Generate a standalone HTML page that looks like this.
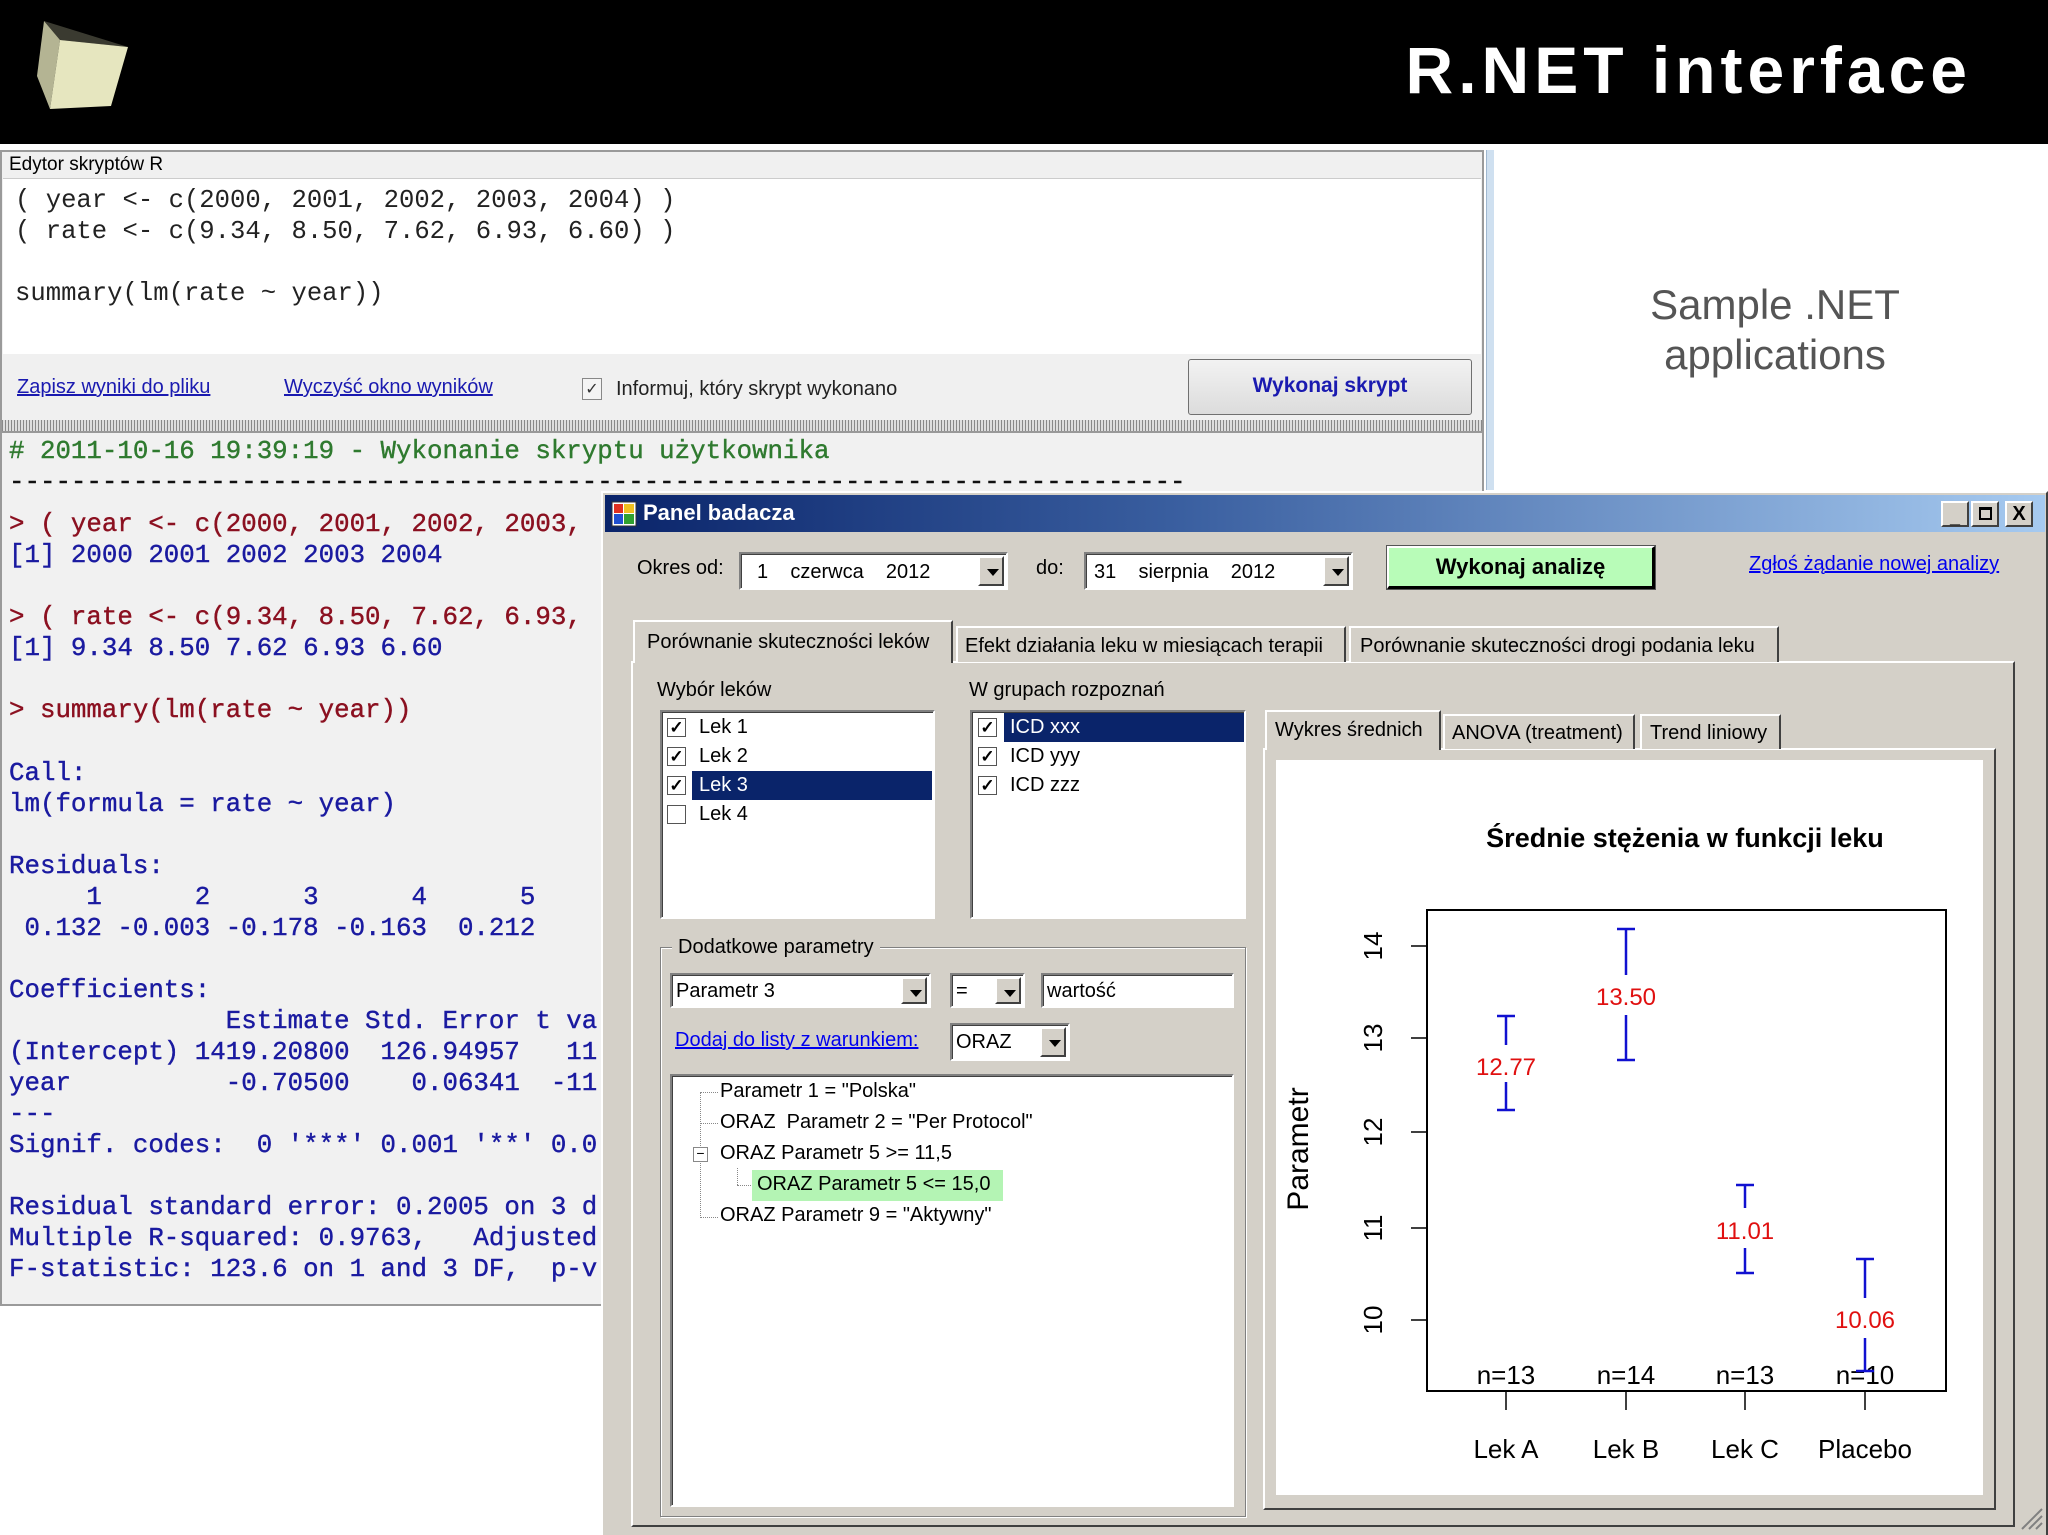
<!DOCTYPE html>
<html><head><meta charset="utf-8"><style>
*{margin:0;padding:0;box-sizing:border-box}
body{width:2048px;height:1535px;position:relative;overflow:hidden;background:#fff;font-family:"Liberation Sans",sans-serif}
.a{position:absolute}
.mono{font-family:"Liberation Mono",monospace;white-space:pre}
.ui{font-family:"Liberation Sans",sans-serif;font-size:20px;color:#000;white-space:nowrap}
.sunk{background:#fff;border-top:2px solid #808080;border-left:2px solid #808080;border-right:2px solid #fff;border-bottom:2px solid #fff;box-shadow:inset 1px 1px 0 #404040}
.btnd{background:#d4d0c8;border-top:2px solid #fff;border-left:2px solid #fff;border-right:2px solid #404040;border-bottom:2px solid #404040}
.arr{position:absolute;top:2px;right:2px;bottom:2px;width:26px;background:#d4d0c8;border-top:2px solid #fff;border-left:2px solid #fff;border-right:2px solid #404040;border-bottom:2px solid #404040}
.arr:after{content:"";position:absolute;left:7px;top:11px;border-left:6px solid transparent;border-right:6px solid transparent;border-top:7px solid #000}
.lnk{color:#0000ee;text-decoration:underline}
.out{position:absolute;left:9px;font-family:"Liberation Mono",monospace;font-size:25.8px;white-space:pre;font-weight:normal;-webkit-text-stroke:0.4px currentColor}
.cb{position:absolute;width:19px;height:19px;background:#fff;border:1px solid #555;font-size:17px;line-height:17px;text-align:center;font-weight:bold}
</style></head><body>
<!-- header -->
<div class="a" style="left:0;top:0;width:2048px;height:144px;background:#000"></div>
<svg class="a" style="left:0;top:0" width="160" height="140" viewBox="0 0 160 140">
<polygon points="44,21 128,47 60,40" fill="#3a3a30"/>
<polygon points="44,21 60,40 50,109 37,76" fill="#b4b493"/>
<polygon points="60,40 128,47 111,106 50,109" fill="#e6e6bf"/>
</svg>
<div class="a" style="left:1300px;top:30px;width:672px;text-align:right;color:#fff;font-weight:bold;font-size:66px;line-height:80px;letter-spacing:5px">R.NET interface</div>
<div class="a" style="left:1560px;top:280px;width:430px;text-align:center;color:#555;font-size:42px;line-height:50px">Sample .NET<br>applications</div>

<!-- editor -->
<div class="a" style="left:0;top:150px;width:1484px;height:1156px;background:#f0f0f0;border:2px solid #9a9a9a"></div>
<div class="a" style="left:1486px;top:150px;width:8px;height:340px;background:#cfe0f0;border-left:1px solid #a0b8d0"></div>
<div class="a ui" style="left:9px;top:154px;font-size:19px">Edytor skryptów R</div>
<div class="a" style="left:3px;top:178px;width:1478px;height:176px;background:#fff;border-top:1px solid #ccc"></div>
<div class="a mono" style="left:15px;top:185px;font-size:25.6px;line-height:31px;color:#222">( year &lt;- c(2000, 2001, 2002, 2003, 2004) )
( rate &lt;- c(9.34, 8.50, 7.62, 6.93, 6.60) )

summary(lm(rate ~ year))</div>
<div class="a ui lnk" style="left:17px;top:376px;color:#1a1ab0">Zapisz wyniki do pliku</div>
<div class="a ui lnk" style="left:284px;top:376px;color:#1a1ab0">Wyczyść okno wyników</div>
<div class="a" style="left:582px;top:378px;width:20px;height:22px;border:1px solid #888;background:#f4f4f4;font-size:16px;text-align:center;color:#333">✓</div>
<div class="a ui" style="left:616px;top:378px;color:#222">Informuj, który skrypt wykonano</div>
<div class="a" style="left:1188px;top:359px;width:284px;height:56px;border:1px solid #707070;border-radius:3px;background:linear-gradient(#f2f2f2,#dcdcdc);text-align:center;line-height:52px;font-weight:bold;font-size:21px;color:#1a1ab0">Wykonaj skrypt</div>
<div class="a" style="left:2px;top:420px;width:1480px;height:11px;background:repeating-linear-gradient(90deg,#888 0 1px,#ddd 1px 3px)"></div>
<div class="a" style="left:2px;top:431px;width:1480px;height:873px;background:#f1f1f1;border-top:2px solid #999"></div>
<div class="out" style="top:437px;color:#2f7a2f"># 2011-10-16 19:39:19 - Wykonanie skryptu użytkownika</div>
<div class="out" style="top:468px;color:#111">----------------------------------------------------------------------------</div>
<div class="out" style="top:510px;color:#8b1020">&gt; ( year &lt;- c(2000, 2001, 2002, 2003,</div>
<div class="out" style="top:541px;color:#1a1aa0">[1] 2000 2001 2002 2003 2004</div>
<div class="out" style="top:603px;color:#8b1020">&gt; ( rate &lt;- c(9.34, 8.50, 7.62, 6.93,</div>
<div class="out" style="top:634px;color:#1a1aa0">[1] 9.34 8.50 7.62 6.93 6.60</div>
<div class="out" style="top:696px;color:#8b1020">&gt; summary(lm(rate ~ year))</div>
<div class="out" style="top:758px;color:#1a1aa0;line-height:31px">Call:
lm(formula = rate ~ year)

Residuals:
     1      2      3      4      5
 0.132 -0.003 -0.178 -0.163  0.212

Coefficients:
              Estimate Std. Error t va
(Intercept) 1419.20800  126.94957   11
year          -0.70500    0.06341  -11
---
Signif. codes:  0 '***' 0.001 '**' 0.0

Residual standard error: 0.2005 on 3 d
Multiple R-squared: 0.9763,   Adjusted
F-statistic: 123.6 on 1 and 3 DF,  p-v</div>

<!-- panel badacza -->
<div class="a" style="left:601px;top:491px;width:1447px;height:1044px;background:#d4d0c8;border:2px solid #fff;border-right-color:#404040;border-bottom:none"></div>
<div class="a" style="left:605px;top:495px;width:1440px;height:37px;background:linear-gradient(90deg,#0a246a,#3a5fa0 40%,#a6caf0)"></div>
<svg class="a" style="left:611px;top:501px" width="26" height="26"><rect x="1" y="1" width="24" height="24" fill="#fff" stroke="#333"/><rect x="3" y="3" width="9" height="9" fill="#e03020"/><rect x="13" y="3" width="10" height="9" fill="#f0c020"/><rect x="3" y="13" width="9" height="10" fill="#2050d0"/><rect x="13" y="13" width="10" height="10" fill="#30a030"/></svg>
<div class="a" style="left:643px;top:500px;color:#fff;font-weight:bold;font-size:22px">Panel badacza</div>
<div class="a btnd" style="left:1941px;top:501px;width:28px;height:26px;font-size:18px;font-weight:bold;text-align:center;line-height:28px">_</div>
<div class="a btnd" style="left:1971px;top:501px;width:28px;height:26px"><div class="a" style="left:6px;top:4px;width:13px;height:13px;border:2px solid #000;border-top-width:3px"></div></div>
<div class="a btnd" style="left:2005px;top:501px;width:28px;height:26px;font-size:20px;font-weight:bold;text-align:center;line-height:22px">X</div>

<div class="a ui" style="left:637px;top:557px">Okres od:</div>
<div class="a sunk" style="left:739px;top:552px;width:269px;height:38px"><span class="a ui" style="left:16px;top:7px">1&nbsp;&nbsp;&nbsp; czerwca&nbsp;&nbsp;&nbsp; 2012</span><div class="arr"></div></div>
<div class="a ui" style="left:1036px;top:557px">do:</div>
<div class="a sunk" style="left:1084px;top:552px;width:269px;height:38px"><span class="a ui" style="left:8px;top:7px">31&nbsp;&nbsp;&nbsp; sierpnia&nbsp;&nbsp;&nbsp; 2012</span><div class="arr"></div></div>
<div class="a" style="left:1387px;top:546px;width:268px;height:43px;background:#b8fcb8;border:2px solid #fff;border-right:3px solid #000;border-bottom:3px solid #000;outline:1px solid #555;text-align:center;line-height:38px;font-weight:bold;font-size:22px">Wykonaj analizę</div>
<div class="a ui lnk" style="left:1749px;top:553px">Zgłoś żądanie nowej analizy</div>

<!-- main tabs -->
<div class="a" style="left:631px;top:661px;width:1384px;height:866px;border-top:2px solid #fff;border-left:2px solid #fff;border-right:2px solid #404040;border-bottom:2px solid #404040"></div>
<div class="a btnd" style="left:633px;top:620px;width:320px;height:43px;border-bottom:none;background:#d4d0c8"><span class="a ui" style="left:12px;top:9px">Porównanie skuteczności leków</span></div>
<div class="a btnd" style="left:956px;top:626px;width:390px;height:36px;border-bottom:none"><span class="a ui" style="left:7px;top:7px">Efekt działania leku w miesiącach terapii</span></div>
<div class="a btnd" style="left:1349px;top:626px;width:430px;height:36px;border-bottom:none"><span class="a ui" style="left:9px;top:7px">Porównanie skuteczności drogi podania leku</span></div>

<div class="a ui" style="left:657px;top:679px">Wybór leków</div>
<div class="a sunk" style="left:660px;top:710px;width:275px;height:209px"></div>
<div class="a" style="left:692px;top:771px;width:240px;height:29px;background:#0a246a"></div>
<div class="cb" style="left:667px;top:718px">✓</div><div class="a ui" style="left:699px;top:716px">Lek 1</div>
<div class="cb" style="left:667px;top:747px">✓</div><div class="a ui" style="left:699px;top:745px">Lek 2</div>
<div class="cb" style="left:667px;top:776px">✓</div><div class="a ui" style="left:699px;top:774px;color:#fff">Lek 3</div>
<div class="cb" style="left:667px;top:805px"></div><div class="a ui" style="left:699px;top:803px">Lek 4</div>

<div class="a ui" style="left:969px;top:679px">W grupach rozpoznań</div>
<div class="a sunk" style="left:970px;top:710px;width:276px;height:209px"></div>
<div class="a" style="left:1004px;top:713px;width:240px;height:29px;background:#0a246a"></div>
<div class="cb" style="left:978px;top:718px">✓</div><div class="a ui" style="left:1010px;top:716px;color:#fff">ICD xxx</div>
<div class="cb" style="left:978px;top:747px">✓</div><div class="a ui" style="left:1010px;top:745px">ICD yyy</div>
<div class="cb" style="left:978px;top:776px">✓</div><div class="a ui" style="left:1010px;top:774px">ICD zzz</div>

<!-- group box -->
<div class="a" style="left:660px;top:947px;width:586px;height:570px;border:1px solid #808080;box-shadow:1px 1px 0 #fff,inset 1px 1px 0 #fff"></div>
<div class="a ui" style="left:672px;top:936px;background:#d4d0c8;padding:0 6px">Dodatkowe parametry</div>
<div class="a sunk" style="left:670px;top:973px;width:261px;height:35px"><span class="a ui" style="left:4px;top:5px">Parametr 3</span><div class="arr"></div></div>
<div class="a sunk" style="left:950px;top:973px;width:75px;height:35px"><span class="a ui" style="left:4px;top:5px">=</span><div class="arr"></div></div>
<div class="a sunk" style="left:1041px;top:973px;width:193px;height:35px"><span class="a ui" style="left:4px;top:5px">wartość</span></div>
<div class="a ui lnk" style="left:675px;top:1029px">Dodaj do listy z warunkiem:</div>
<div class="a sunk" style="left:950px;top:1023px;width:120px;height:38px"><span class="a ui" style="left:4px;top:6px">ORAZ</span><div class="arr"></div></div>
<div class="a sunk" style="left:670px;top:1074px;width:564px;height:433px"></div>
<div class="a" style="left:700px;top:1092px;height:126px;border-left:1px dotted #888"></div>
<div class="a" style="left:737px;top:1168px;height:17px;border-left:1px dotted #888"></div>
<div class="a" style="left:700px;top:1092px;width:18px;border-top:1px dotted #888"></div>
<div class="a" style="left:700px;top:1123px;width:18px;border-top:1px dotted #888"></div>
<div class="a" style="left:737px;top:1185px;width:16px;border-top:1px dotted #888"></div>
<div class="a" style="left:700px;top:1217px;width:18px;border-top:1px dotted #888"></div>
<div class="a" style="left:693px;top:1147px;width:15px;height:15px;border:1px solid #888;background:#fff;font-size:14px;line-height:11px;text-align:center">−</div>
<div class="a" style="left:752px;top:1170px;width:251px;height:31px;background:#b4f4b4"></div>
<div class="a ui" style="left:720px;top:1080px">Parametr 1 = "Polska"</div>
<div class="a ui" style="left:720px;top:1111px">ORAZ&nbsp; Parametr 2 = "Per Protocol"</div>
<div class="a ui" style="left:720px;top:1142px">ORAZ Parametr 5 &gt;= 11,5</div>
<div class="a ui" style="left:757px;top:1173px">ORAZ Parametr 5 &lt;= 15,0</div>
<div class="a ui" style="left:720px;top:1204px">ORAZ Parametr 9 = "Aktywny"</div>

<!-- inner tabs -->
<div class="a" style="left:1263px;top:748px;width:733px;height:762px;border-top:2px solid #fff;border-left:2px solid #fff;border-right:2px solid #404040;border-bottom:2px solid #404040"></div>
<div class="a btnd" style="left:1265px;top:710px;width:176px;height:40px;border-bottom:none"><span class="a ui" style="left:8px;top:7px">Wykres średnich</span></div>
<div class="a btnd" style="left:1443px;top:714px;width:192px;height:35px;border-bottom:none"><span class="a ui" style="left:7px;top:6px">ANOVA (treatment)</span></div>
<div class="a btnd" style="left:1640px;top:714px;width:141px;height:35px;border-bottom:none"><span class="a ui" style="left:8px;top:6px">Trend liniowy</span></div>
<div class="a" style="left:1276px;top:760px;width:707px;height:735px;background:#fff"></div>
<svg class="a" style="left:1276px;top:760px" width="707" height="735" viewBox="1276 760 707 735" font-family="Liberation Sans, sans-serif">
<text x="1685" y="847" text-anchor="middle" font-size="27" font-weight="bold">Średnie stężenia w funkcji leku</text>
<rect x="1427" y="910" width="519" height="481" fill="none" stroke="#000" stroke-width="2"/>
<g stroke="#000" stroke-width="1.5">
<line x1="1411" y1="946" x2="1427" y2="946"/><line x1="1411" y1="1038" x2="1427" y2="1038"/><line x1="1411" y1="1132" x2="1427" y2="1132"/><line x1="1411" y1="1228" x2="1427" y2="1228"/><line x1="1411" y1="1320" x2="1427" y2="1320"/>
<line x1="1506" y1="1391" x2="1506" y2="1410"/><line x1="1626" y1="1391" x2="1626" y2="1410"/><line x1="1745" y1="1391" x2="1745" y2="1410"/><line x1="1865" y1="1391" x2="1865" y2="1410"/>
</g>
<g font-size="26" text-anchor="middle" fill="#000">
<text transform="translate(1382,946) rotate(-90)">14</text>
<text transform="translate(1382,1038) rotate(-90)">13</text>
<text transform="translate(1382,1132) rotate(-90)">12</text>
<text transform="translate(1382,1228) rotate(-90)">11</text>
<text transform="translate(1382,1320) rotate(-90)">10</text>
<text transform="translate(1308,1149) rotate(-90)" font-size="30">Parametr</text>
<text x="1506" y="1384">n=13</text><text x="1626" y="1384">n=14</text><text x="1745" y="1384">n=13</text><text x="1865" y="1384">n=10</text>
<text x="1506" y="1458">Lek A</text><text x="1626" y="1458">Lek B</text><text x="1745" y="1458">Lek C</text><text x="1865" y="1458">Placebo</text>
</g>
<g stroke="#1010d0" stroke-width="2.5">
<line x1="1506" y1="1016" x2="1506" y2="1045"/><line x1="1506" y1="1082" x2="1506" y2="1110"/><line x1="1497" y1="1016" x2="1515" y2="1016"/><line x1="1497" y1="1110" x2="1515" y2="1110"/>
<line x1="1626" y1="929" x2="1626" y2="975"/><line x1="1626" y1="1015" x2="1626" y2="1060"/><line x1="1617" y1="929" x2="1635" y2="929"/><line x1="1617" y1="1060" x2="1635" y2="1060"/>
<line x1="1745" y1="1185" x2="1745" y2="1208"/><line x1="1745" y1="1248" x2="1745" y2="1273"/><line x1="1736" y1="1185" x2="1754" y2="1185"/><line x1="1736" y1="1273" x2="1754" y2="1273"/>
<line x1="1865" y1="1259" x2="1865" y2="1298"/><line x1="1865" y1="1338" x2="1865" y2="1371"/><line x1="1856" y1="1259" x2="1874" y2="1259"/><line x1="1856" y1="1371" x2="1874" y2="1371"/>
</g>
<g font-size="24" text-anchor="middle" fill="#e01010">
<text x="1506" y="1075">12.77</text><text x="1626" y="1005">13.50</text><text x="1745" y="1239">11.01</text><text x="1865" y="1328">10.06</text>
</g>
</svg>
<svg class="a" style="left:2018px;top:1505px" width="26" height="26"><g stroke="#808080" stroke-width="2"><line x1="24" y1="4" x2="4" y2="24"/><line x1="24" y1="11" x2="11" y2="24"/><line x1="24" y1="18" x2="18" y2="24"/></g></svg>
</body></html>
